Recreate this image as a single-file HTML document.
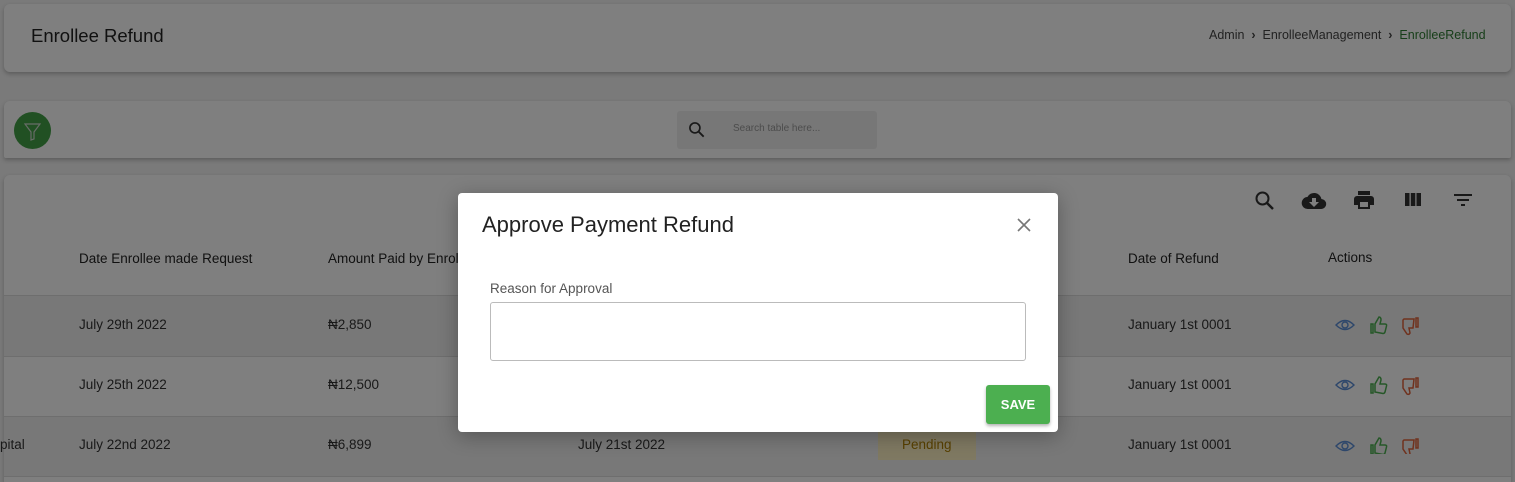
<!DOCTYPE html>
<html><head><style>
*{box-sizing:border-box;margin:0;padding:0}
html,body{width:1515px;height:482px;overflow:hidden}
body{background:#f4f4f4;font-family:"Liberation Sans",sans-serif;position:relative;color:#212121}
.card{position:absolute;background:#fff;border-radius:6px;box-shadow:0 2px 4px rgba(0,0,0,.25)}
.t{position:absolute;white-space:nowrap}
.ov{position:absolute;left:0;top:0;width:1515px;height:482px;background:rgba(0,0,0,.5)}
.row{position:absolute;left:4px;width:1507px;border-top:1px solid #ddd}
.cell{position:absolute;font-size:13.5px;color:#333;white-space:nowrap}
</style></head><body>
<div class="card" style="left:4px;top:4px;width:1507px;height:68px">
 <div class="t" style="left:27px;top:21px;font-size:18.5px;color:#222">Enrollee Refund</div>
 <div class="t" style="left:1205px;top:24px;font-size:12.5px;color:#444">Admin &nbsp;<b>›</b>&nbsp; EnrolleeManagement &nbsp;<b>›</b>&nbsp; <span style="color:#2e7d32">EnrolleeRefund</span></div>
</div>
<div class="card" style="left:4px;top:101px;width:1507px;height:57px;border-radius:6px 6px 2px 2px">
 <div style="position:absolute;left:10px;top:11px;width:37px;height:37px;border-radius:50%;background:#43a047">
  <svg width="37" height="37" viewBox="0 0 37 37"><path d="M11 12h15l-6 8v7l-3 1v-8z" fill="none" stroke="#cfd8cf" stroke-width="1.2"/></svg>
 </div>
 <div style="position:absolute;left:673px;top:10px;width:200px;height:38px;background:#eee;border-radius:3px">
  <svg style="position:absolute;left:10px;top:9px" width="20" height="20" viewBox="0 0 24 24"><circle cx="9.5" cy="9.5" r="6" fill="none" stroke="#333" stroke-width="2"/><path d="M14 14l6 6" stroke="#333" stroke-width="2.2"/></svg>
  <div class="t" style="left:56px;top:12px;font-size:10px;color:#999">Search table here...</div>
 </div>
</div>
<div class="card" style="left:4px;top:175px;width:1507px;height:307px;border-radius:6px 6px 0 0">
 <svg style="position:absolute;left:1249px;top:14px" width="24" height="24" viewBox="0 0 24 24"><circle cx="9.5" cy="9.5" r="6" fill="none" stroke="#333" stroke-width="2"/><path d="M14 14l6 6" stroke="#333" stroke-width="2.4"/></svg>
 <svg style="position:absolute;left:1296px;top:14px" width="28" height="24" viewBox="0 0 24 24"><path d="M19.4 10A7.5 7.5 0 0 0 5.4 8 6 6 0 0 0 6 20h13a5 5 0 0 0 .4-10zM17 13l-5 5-5-5h3V9h4v4z" fill="#333"/></svg>
 <svg style="position:absolute;left:1348px;top:13px" width="24" height="24" viewBox="0 0 24 24"><path d="M19 8H5a3 3 0 0 0-3 3v6h4v4h12v-4h4v-6a3 3 0 0 0-3-3zm-3 11H8v-5h8v5zM18 3H6v4h12z" fill="#333"/></svg>
 <svg style="position:absolute;left:1397px;top:13px" width="24" height="24" viewBox="0 0 24 24"><path d="M4 5h4.5v13H4zM9.8 5h4.5v13H9.8zM15.5 5H20v13h-4.5z" fill="#333"/></svg>
 <svg style="position:absolute;left:1447px;top:13px" width="24" height="24" viewBox="0 0 24 24"><path d="M3 6h18v2H3zM6 11h12v2H6zM10 16h4v2h-4z" fill="#333"/></svg>
</div>
<div class="cell" style="left:79px;top:251px;color:#222">Date Enrollee made Request</div>
<div class="cell" style="left:328px;top:251px;color:#222">Amount Paid by Enrollee</div>
<div class="cell" style="left:1128px;top:251px;color:#222">Date of Refund</div>
<div class="cell" style="left:1328px;top:250px;color:#222">Actions</div>
<div class="row" style="top:295px;height:61px;background:#f0f0f0"></div>
<div class="row" style="top:356px;height:60px;background:#fff"></div>
<div class="row" style="top:416px;height:60px;background:#f0f0f0"></div>
<div class="row" style="top:476px;height:6px;background:#fff"></div>
<div class="cell" style="left:79px;top:317px">July 29th 2022</div>
<div class="cell" style="left:328px;top:317px">₦2,850</div>
<div class="cell" style="left:1128px;top:317px">January 1st 0001</div>
<div class="cell" style="left:79px;top:377px">July 25th 2022</div>
<div class="cell" style="left:328px;top:377px">₦12,500</div>
<div class="cell" style="left:1128px;top:377px">January 1st 0001</div>
<div class="cell" style="left:0px;top:437px">pital</div>
<div class="cell" style="left:79px;top:437px">July 22nd 2022</div>
<div class="cell" style="left:328px;top:437px">₦6,899</div>
<div class="cell" style="left:578px;top:437px">July 21st 2022</div>
<div style="position:absolute;left:878px;top:432px;width:98px;height:28px;background:#fff3c4"></div>
<div class="cell" style="left:902px;top:437px;color:#b08000">Pending</div>
<div class="cell" style="left:1128px;top:437px">January 1st 0001</div>
<svg style="position:absolute;left:1334px;top:314px" width="100" height="140" viewBox="0 0 100 140">
 <g id="a">
  <path d="M2 11q9-9 18 0q-9 9-18 0z" fill="none" stroke="#5c8ed6" stroke-width="1.4"/><circle cx="11" cy="11" r="3" fill="none" stroke="#5c8ed6" stroke-width="1.4"/>
  <path d="M37 10h2v9h-2zM41 18V10l4-7q2 0 2 3l-1 4h5q2 0 1.5 2l-1.5 6q-.5 1.5-2 1.5z" fill="none" stroke="#4caf50" stroke-width="1.5"/>
  <path d="M70 5h10v0l-1 9h-4l1 5q-1 2-3 1l-4-6v-8zM82 4h2v9h-2z" fill="none" stroke="#e0643c" stroke-width="1.5"/>
 </g>
 <use href="#a" y="60"/><use href="#a" y="121"/>
</svg>
<div class="ov"></div>
<div style="position:absolute;left:458px;top:193px;width:600px;height:239px;background:#fff;border-radius:4px;box-shadow:0 4px 20px rgba(0,0,0,.3)">
 <div class="t" style="left:24px;top:19px;font-size:22px;color:#222">Approve Payment Refund</div>
 <svg style="position:absolute;left:558px;top:24px" width="16" height="16" viewBox="0 0 16 16"><path d="M2 2l12 12M14 2L2 14" stroke="#777" stroke-width="1.6"/></svg>
 <div class="t" style="left:32px;top:88px;font-size:13.5px;color:#555">Reason for Approval</div>
 <div style="position:absolute;left:32px;top:109px;width:536px;height:59px;border:1px solid #bbb;border-radius:3px"></div>
 <div style="position:absolute;left:528px;top:192px;width:64px;height:39px;background:#4caf50;border-radius:3px;box-shadow:0 2px 3px rgba(0,0,0,.3);color:#fff;font-size:13px;font-weight:bold;text-align:center;line-height:39px">SAVE</div>
</div>
</body></html>
